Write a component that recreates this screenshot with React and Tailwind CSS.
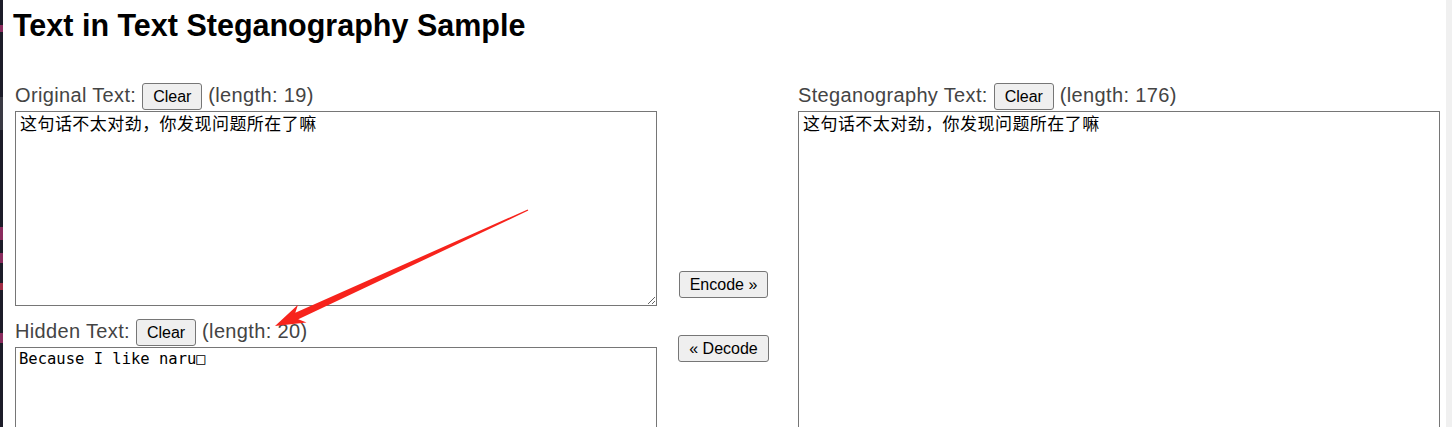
import React from "react";

const labelCls =
  "text-[20px] leading-[20px] tracking-[0.35px] text-[#444] whitespace-pre";
const btnCls =
  "h-[27px] px-[10px] text-[16px] leading-[18px] text-black bg-[#efefef] border border-[#767676] rounded-[3px] whitespace-pre";
const fontSans = { fontFamily: '"Liberation Sans", Arial, sans-serif' };

function LabelRow({ label, len }) {
  return (
    <div className="flex items-baseline h-[28px]" style={fontSans}>
      <span className={labelCls}>{label} </span>
      <button className={btnCls} style={fontSans}>
        Clear
      </button>
      <span className={labelCls}> (length: {len})</span>
    </div>
  );
}

const cjkTa =
  "block w-[642px] border border-[#767676] bg-white text-black pl-[4px] pt-[1px] text-[17px] leading-[20px] tracking-[0.45px] outline-none";
const cjkFont = {
  fontFamily: '"Noto Sans Mono CJK SC", "Noto Sans CJK SC", monospace',
};

export default function App() {
  const cjk = "这句话不太对劲，你发现问题所在了嘛";
  return (
    <div className="relative flex w-[1452px] h-[427px] overflow-hidden bg-white">
      {/* left dark strip */}
      <div className="flex flex-col w-[3px] h-full bg-[#1d1d29] shrink-0">
        <div className="h-[25px]" />
        <div className="h-[7px] bg-[#8a2c5e]" />
        <div className="h-[65px]" />
        <div className="h-[33px] bg-[#3a3a44]" />
        <div className="h-[97px]" />
        <div className="h-[13px] bg-[#8a2c5e]" />
        <div className="h-[13px]" />
        <div className="h-[10px] bg-[#8a2c5e]" />
        <div className="h-[20px]" />
        <div className="h-[7px] bg-[#a02c44]" />
        <div className="h-[43px]" />
        <div className="h-[10px] bg-[#8a2c5e]" />
      </div>

      {/* main */}
      <div className="flex-1 flex flex-col">
        <h1
          className="mt-[7px] pl-[10px] text-[30.5px] leading-[36px] font-bold text-black whitespace-nowrap"
          style={fontSans}
        >
          Text in Text Steganography Sample
        </h1>

        <div className="flex mt-[40px] pl-[12px]">
          {/* left column */}
          <div className="flex flex-col w-[642px]">
            <LabelRow label="Original Text:" len={19} />
            <textarea
              className={cjkTa + " h-[195px]"}
              style={cjkFont}
              defaultValue={cjk}
              spellCheck={false}
            />
            <div className="mt-[13px]">
              <LabelRow label="Hidden Text:" len={20} />
            </div>
            <textarea
              className="block w-[642px] h-[195px] border border-[#767676] bg-white text-black pl-[3px] pt-[1px] text-[15.5px] leading-[20px] outline-none"
              style={{
                fontFamily: '"DejaVu Sans Mono", "Liberation Mono", monospace',
              }}
              defaultValue={"Because I like naru\u25A1"}
              spellCheck={false}
            />
          </div>

          {/* middle column */}
          <div className="flex flex-col items-center w-[141px] pr-[8px] pt-[188px]">
            <button className={btnCls} style={fontSans}>
              Encode »
            </button>
            <button className={btnCls + " mt-[37px]"} style={fontSans}>
              « Decode
            </button>
          </div>

          {/* right column */}
          <div className="flex flex-col w-[642px]">
            <LabelRow label="Steganography Text:" len={176} />
            <textarea
              className={cjkTa + " h-[431px]"}
              style={cjkFont}
              defaultValue={cjk}
              spellCheck={false}
            />
          </div>
        </div>
      </div>

      {/* right gap + scrollbar strip */}
      <div className="w-[6px] shrink-0 bg-white" />
      <div className="w-[6px] shrink-0 bg-[#f0f0f0]" />

      {/* red annotation arrow */}
      <svg
        className="absolute left-0 top-0 pointer-events-none"
        width="1452"
        height="427"
        viewBox="0 0 1452 427"
      >
        <polygon
          points="275,326 306.5,322.5 298.3,319.2 528.3,210.6 527.7,209.4 295.3,312.8 298,304.8"
          fill="#f7231c"
        />
      </svg>
    </div>
  );
}
